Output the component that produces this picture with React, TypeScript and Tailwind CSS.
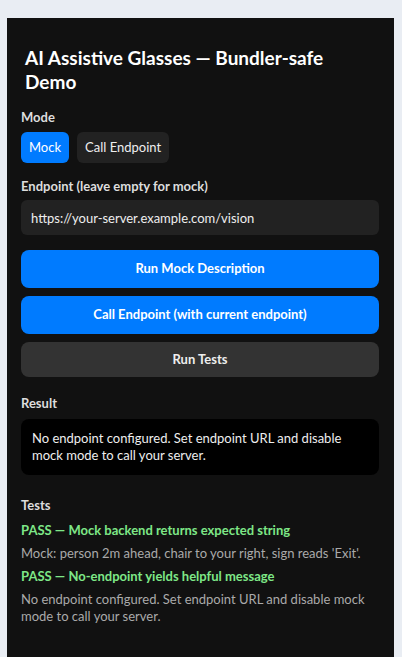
import { useState } from "react";

const tests = [
  {
    name: "Mock backend returns expected string",
    output: "Mock: person 2m ahead, chair to your right, sign reads 'Exit'.",
  },
  {
    name: "No-endpoint yields helpful message",
    output: "No endpoint configured. Set endpoint URL and disable mock mode to call your server.",
  },
];

const App = () => {
  const [mode, setMode] = useState<"mock" | "endpoint">("mock");
  const [endpoint, setEndpoint] = useState("https://your-server.example.com/vision");
  const result = "No endpoint configured. Set endpoint URL and disable mock mode to call your server.";

  return (
    <div
      className="min-h-screen bg-[#e9edf3] pl-[7px] pr-[8px] pt-[18px]"
      style={{ fontFamily: 'Lato, "Noto Sans", sans-serif' }}
    >
      <div className="min-h-[639px] bg-[#111111] pl-[14px] pr-[15px] pt-[28px] pb-6 text-white">
        {/* Header */}
        <h2 className="ml-1 max-w-[330px] text-[19px] font-bold leading-6">
          AI Assistive Glasses — Bundler-safe Demo
        </h2>

        {/* Mode */}
        <div className="mt-[14px] text-[13px] font-bold leading-[18px] text-[#dddddd]">Mode</div>
        <div className="mt-[6px] flex gap-2">
          <button
            onClick={() => setMode("mock")}
            className={`rounded-md px-2 py-[7px] text-[13px] leading-[17px] ${
              mode === "mock" ? "bg-[#007bff] text-white" : "bg-[#222222] text-[#eeeeee]"
            }`}
          >
            Mock
          </button>
          <button
            onClick={() => setMode("endpoint")}
            className={`rounded-md px-2 py-[7px] text-[13px] leading-[17px] ${
              mode === "endpoint" ? "bg-[#007bff] text-white" : "bg-[#222222] text-[#eeeeee]"
            }`}
          >
            Call Endpoint
          </button>
        </div>

        {/* Endpoint */}
        <div className="mt-[14px] text-[13px] font-bold leading-[18px] text-[#dddddd]">
          Endpoint (leave empty for mock)
        </div>
        <input
          value={endpoint}
          onChange={(e) => setEndpoint(e.target.value)}
          className="mt-[5px] block h-[35px] w-full rounded-md bg-[#222222] px-[10px] text-[13px] text-[#eeeeee] outline-none"
        />

        {/* Actions */}
        <div className="mt-[15px] flex flex-col gap-2">
          <button className="h-[38px] w-full rounded-lg bg-[#007bff] text-[13px] font-bold text-white">
            Run Mock Description
          </button>
          <button className="h-[38px] w-full rounded-lg bg-[#007bff] text-[13px] font-bold text-white">
            Call Endpoint (with current endpoint)
          </button>
          <button className="h-[35px] w-full rounded-lg bg-[#333333] text-[13px] font-bold text-[#eeeeee]">
            Run Tests
          </button>
        </div>

        {/* Result */}
        <div className="mt-[17px] text-[13px] font-bold leading-[18px] text-[#dddddd]">Result</div>
        <div className="mt-[7px] rounded-lg bg-black px-[11px] py-[11px] text-[13px] leading-[17px] text-[#eeeeee]">
          {result}
        </div>

        {/* Tests */}
        <div className="mt-[21px] text-[13px] font-bold leading-[18px] text-[#dddddd]">Tests</div>
        <div className="mt-[8px] flex flex-col gap-[6px]">
          {tests.map((t) => (
            <div key={t.name} className="flex flex-col gap-[6px]">
              <div className="text-[13px] font-bold leading-[17px] text-[#7ee787]">PASS — {t.name}</div>
              <div className="text-[13px] leading-[17px] text-[#aaaaaa]">{t.output}</div>
            </div>
          ))}
        </div>
      </div>
    </div>
  );
};

export default App;
